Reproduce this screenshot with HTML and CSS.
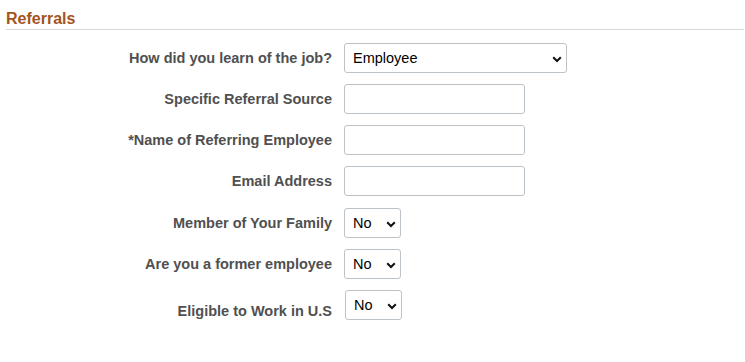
FILE: index.html
```html
<!DOCTYPE html>
<html lang="en">
<head>
<meta charset="utf-8">
<title>Referrals</title>
<link rel="stylesheet" href="styles.css">
</head>
<body>
<div class="page">
  <h2 class="section-title">Referrals</h2>
  <div class="form">
    <div class="row">
      <label class="lbl">How did you learn of the job?</label>
      <div class="sel sel-wide">
        <select><option>Employee</option></select>
        <svg class="chev" width="10" height="7" viewBox="0 0 10 7"><path d="M1.2 1.2 L5 5 L8.8 1.2" fill="none" stroke="#111" stroke-width="2"/></svg>
      </div>
    </div>
    <div class="row">
      <label class="lbl">Specific Referral Source</label>
      <input class="txt" type="text">
    </div>
    <div class="row">
      <label class="lbl">*Name of Referring Employee</label>
      <input class="txt" type="text">
    </div>
    <div class="row">
      <label class="lbl">Email Address</label>
      <input class="txt" type="text">
    </div>
    <div class="row row-gap">
      <label class="lbl">Member of Your Family</label>
      <div class="sel sel-small">
        <select><option>No</option></select>
        <svg class="chev" width="10" height="7" viewBox="0 0 10 7"><path d="M1.2 1.2 L5 5 L8.8 1.2" fill="none" stroke="#111" stroke-width="2"/></svg>
      </div>
    </div>
    <div class="row">
      <label class="lbl">Are you a former employee</label>
      <div class="sel sel-small">
        <select><option>No</option></select>
        <svg class="chev" width="10" height="7" viewBox="0 0 10 7"><path d="M1.2 1.2 L5 5 L8.8 1.2" fill="none" stroke="#111" stroke-width="2"/></svg>
      </div>
    </div>
    <div class="row row-low">
      <label class="lbl">Eligible to Work in U.S</label>
      <div class="sel sel-small sel-shift">
        <select><option>No</option></select>
        <svg class="chev" width="10" height="7" viewBox="0 0 10 7"><path d="M1.2 1.2 L5 5 L8.8 1.2" fill="none" stroke="#111" stroke-width="2"/></svg>
      </div>
    </div>
  </div>
</div>
</body>
</html>
```

FILE: styles.css
```css
html, body {
  margin: 0;
  padding: 0;
  background: #ffffff;
}

.page {
  margin: 0 1px 0 6px;
  font-family: "Liberation Sans", Arial, sans-serif;
}

.section-title {
  margin: 9px 0 0 0;
  padding: 0 0 1px 0;
  font-size: 16px;
  line-height: 19px;
  font-weight: bold;
  color: #a3541c;
  border-bottom: 1px solid #d3d8db;
}

.form {
  display: flex;
  flex-direction: column;
  gap: 11px;
  margin-top: 13px;
}

.row {
  display: flex;
  align-items: center;
  gap: 12px;
  height: 30px;
}

.row-gap {
  margin-top: 1px;
}

.lbl {
  width: 326px;
  flex: none;
  text-align: right;
  font-size: 14.5px;
  line-height: 18px;
  font-weight: bold;
  color: #505050;
}

.row-low .lbl {
  padding-top: 12px;
}

.txt {
  box-sizing: border-box;
  width: 181px;
  height: 30px;
  margin: 0;
  border: 1px solid #bcc3c8;
  border-radius: 3px;
  background: #fff;
}

.sel {
  position: relative;
  height: 30px;
  flex: none;
}

.sel select {
  -webkit-appearance: none;
  appearance: none;
  box-sizing: border-box;
  width: 100%;
  height: 30px;
  margin: 0;
  padding: 0 0 0 8px;
  border: 1px solid #bcc3c8;
  border-radius: 3px;
  background: #fff;
  color: #000;
  font-family: "Liberation Sans", Arial, sans-serif;
  font-size: 14.5px;
}

.sel-wide {
  width: 223px;
}

.sel-small {
  width: 57px;
}

.sel-small select {
  padding-left: 8px;
}

.sel-shift {
  margin-left: 1px;
}

.chev {
  position: absolute;
  right: 5px;
  top: 13px;
  pointer-events: none;
}
```
